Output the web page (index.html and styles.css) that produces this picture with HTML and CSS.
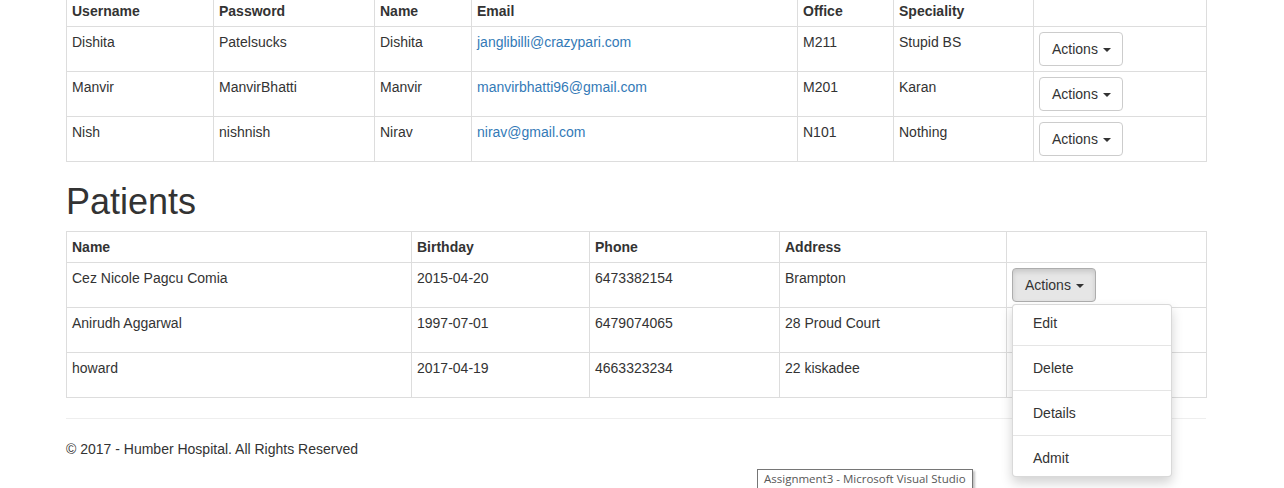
FILE: index.html
```html
<!DOCTYPE html>
<html>
<head>
<meta charset="utf-8">
<link rel="stylesheet" href="styles.css">
</head>
<body>
<div class="container">
  <table class="table top-table">
    <colgroup>
      <col style="width:147px"><col style="width:161px"><col style="width:97px"><col style="width:326px"><col style="width:96px"><col style="width:140px"><col style="width:173px">
    </colgroup>
    <thead>
      <tr><th>Username</th><th>Password</th><th>Name</th><th>Email</th><th>Office</th><th>Speciality</th><th></th></tr>
    </thead>
    <tbody>
      <tr><td>Dishita</td><td>Patelsucks</td><td>Dishita</td><td><a href="#">janglibilli@crazypari.com</a></td><td>M211</td><td>Stupid BS</td><td><div class="btn-group"><button class="btn">Actions <span class="caret"></span></button></div></td></tr>
      <tr><td>Manvir</td><td>ManvirBhatti</td><td>Manvir</td><td><a href="#">manvirbhatti96@gmail.com</a></td><td>M201</td><td>Karan</td><td><div class="btn-group"><button class="btn">Actions <span class="caret"></span></button></div></td></tr>
      <tr><td>Nish</td><td>nishnish</td><td>Nirav</td><td><a href="#">nirav@gmail.com</a></td><td>N101</td><td>Nothing</td><td><div class="btn-group"><button class="btn">Actions <span class="caret"></span></button></div></td></tr>
    </tbody>
  </table>

  <h1 class="heading">Patients</h1>

  <table class="table">
    <colgroup>
      <col style="width:345px"><col style="width:178px"><col style="width:190px"><col style="width:227px"><col style="width:200px">
    </colgroup>
    <thead>
      <tr><th>Name</th><th>Birthday</th><th>Phone</th><th>Address</th><th></th></tr>
    </thead>
    <tbody>
      <tr><td>Cez Nicole Pagcu Comia</td><td>2015-04-20</td><td>6473382154</td><td>Brampton</td><td>
        <div class="btn-group open"><button class="btn active">Actions <span class="caret"></span></button>
          <ul class="dropdown-menu">
            <li><a href="#">Edit</a></li>
            <li class="divider"></li>
            <li><a href="#">Delete</a></li>
            <li class="divider"></li>
            <li><a href="#">Details</a></li>
            <li class="divider"></li>
            <li><a href="#">Admit</a></li>
          </ul>
        </div></td></tr>
      <tr><td>Anirudh Aggarwal</td><td>1997-07-01</td><td>6479074065</td><td>28 Proud Court</td><td><div class="btn-group"><button class="btn">Actions <span class="caret"></span></button></div></td></tr>
      <tr><td>howard</td><td>2017-04-19</td><td>4663323234</td><td>22 kiskadee</td><td><div class="btn-group"><button class="btn">Actions <span class="caret"></span></button></div></td></tr>
    </tbody>
  </table>

  <hr class="rule">
  <footer class="footer">
    <p>&copy; 2017 - Humber Hospital. All Rights Reserved</p>
  </footer>
</div>
<div class="tooltip">Assignment3 - Microsoft Visual Studio</div>
</body>
</html>
```

FILE: styles.css
```css
html, body {
  margin: 0;
  padding: 0;
  background: #fff;
}
body {
  font-family: "Liberation Sans", Arial, Helvetica, sans-serif;
  font-size: 14px;
  line-height: 20px;
  color: #333;
  min-height: 488px;
}
.container {
  width: 1140px;
  margin: 0 0 0 51px;
  padding: 0 15px;
  box-sizing: content-box;
}
.table {
  width: 1140px;
  table-layout: fixed;
  border-collapse: collapse;
  border-spacing: 0;
  margin-bottom: 20px;
}
.top-table {
  margin-top: -5px;
  margin-bottom: 19px;
}
.table th,
.table td {
  border: 1px solid #ddd;
  padding: 5px;
  text-align: left;
  vertical-align: top;
  line-height: 20px;
}
.table thead th {
  font-weight: bold;
  vertical-align: bottom;
}
.table a {
  color: #337ab7;
  text-decoration: none;
}
.heading {
  font-family: "Liberation Sans", Arial, Helvetica, sans-serif;
  font-size: 36px;
  font-weight: 500;
  line-height: 1.1;
  margin: 19px 0 9px;
  padding-top: 1px;
  color: #333;
}
.btn-group {
  position: relative;
  display: inline-block;
  vertical-align: middle;
}
.btn {
  display: inline-block;
  font-family: "Liberation Sans", Arial, Helvetica, sans-serif;
  font-size: 14px;
  line-height: 20px;
  padding: 6px 11px 6px 12px;
  color: #333;
  background: #fff;
  border: 1px solid #ccc;
  border-radius: 4px;
  margin: 0;
  cursor: pointer;
}
.btn.active {
  background: #e6e6e6;
  border-color: #adadad;
  box-shadow: inset 0 3px 5px rgba(0, 0, 0, 0.125);
}
.caret {
  display: inline-block;
  width: 0;
  height: 0;
  margin-left: 1px;
  vertical-align: middle;
  border-top: 4px solid #333;
  border-right: 4px solid transparent;
  border-left: 4px solid transparent;
}
.dropdown-menu {
  position: absolute;
  top: 100%;
  left: 0;
  z-index: 1000;
  min-width: 160px;
  padding: 5px 0;
  margin: 2px 0 0;
  list-style: none;
  background: #fff;
  border: 1px solid rgba(0, 0, 0, 0.15);
  border-radius: 4px;
  box-shadow: 0 6px 12px rgba(0, 0, 0, 0.175);
  box-sizing: border-box;
}
.dropdown-menu li a {
  display: block;
  padding: 3px 20px;
  line-height: 20px;
  color: #333;
  text-decoration: none;
  white-space: nowrap;
}
.dropdown-menu .divider {
  height: 1px;
  margin: 9px 0;
  overflow: hidden;
  background: #e5e5e5;
}
.rule {
  margin: 20px 0;
  border: 0;
  border-top: 1px solid #eee;
}
.footer p {
  margin: 0 0 10px;
}
.tooltip {
  position: absolute;
  left: 757px;
  top: 469px;
  z-index: 2000;
  padding: 1px 6px 3px;
  font-family: "Open Sans", "Noto Sans", sans-serif;
  font-size: 11.5px;
  line-height: 16px;
  color: #575757;
  background: #fff;
  border: 1px solid #767676;
  box-shadow: 2px 2px 2px rgba(0, 0, 0, 0.25);
  white-space: nowrap;
}
```
